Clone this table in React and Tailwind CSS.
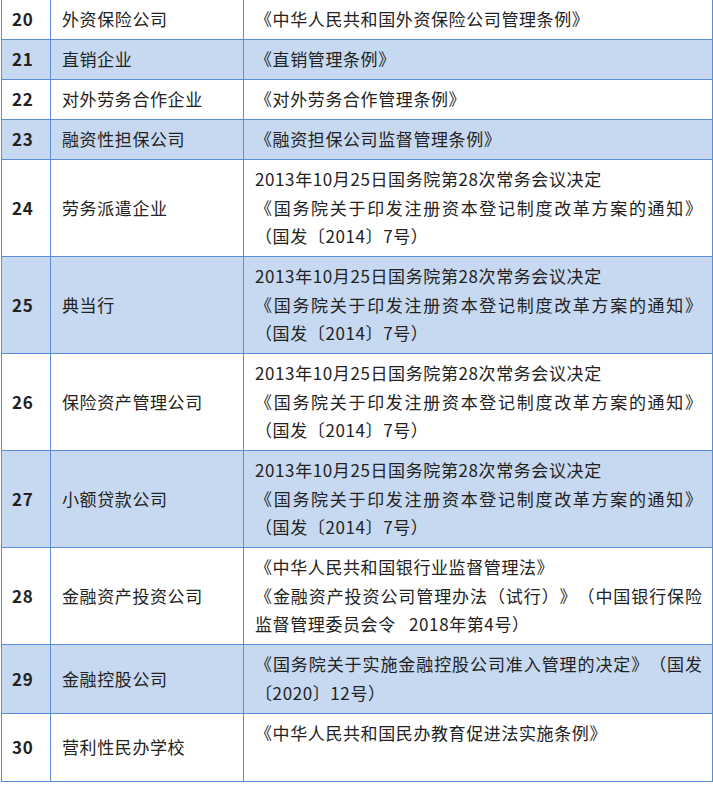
const reform = [
  '2013年10月25日国务院第28次常务会议决定',
  { text: '《国务院关于印发注册资本登记制度改革方案的通知》', justify: true },
  '（国发〔2014〕7号）',
]

const rows = [
  { no: 20, name: '外资保险公司', law: ['《中华人民共和国外资保险公司管理条例》'] },
  { no: 21, name: '直销企业', law: ['《直销管理条例》'] },
  { no: 22, name: '对外劳务合作企业', law: ['《对外劳务合作管理条例》'] },
  { no: 23, name: '融资性担保公司', law: ['《融资担保公司监督管理条例》'] },
  { no: 24, name: '劳务派遣企业', law: reform },
  { no: 25, name: '典当行', law: reform },
  { no: 26, name: '保险资产管理公司', law: reform },
  { no: 27, name: '小额贷款公司', law: reform },
  {
    no: 28,
    name: '金融资产投资公司',
    law: [
      '《中华人民共和国银行业监督管理法》',
      { text: '《金融资产投资公司管理办法（试行）》（中国银行保险', justify: true },
      '监督管理委员会令\u00a0\u00a0\u00a02018年第4号）',
    ],
  },
  {
    no: 29,
    name: '金融控股公司',
    law: [
      { text: '《国务院关于实施金融控股公司准入管理的决定》（国发', justify: true },
      '〔2020〕12号）',
    ],
  },
  { no: 30, name: '营利性民办学校', law: ['《中华人民共和国民办教育促进法实施条例》', ''] },
]

const Line = ({ line }) => {
  const text = typeof line === 'string' ? line : line.text
  const justify = typeof line === 'object' && line.justify
  return (
    <div
      className={
        justify
          ? 'h-[28.5px] whitespace-nowrap tracking-normal [text-align-last:justify]'
          : 'h-[28.5px] whitespace-nowrap'
      }
    >
      {text}
    </div>
  )
}

export default function App() {
  return (
    <div className="w-[713px] h-[789px] overflow-hidden bg-white">
      <table
        className="ml-px -mt-px w-[711px] table-fixed border-collapse text-[17px] leading-[28.5px] tracking-[0.6px] text-[#222] [text-spacing-trim:space-all]"
        style={{ fontFamily: '"Noto Sans CJK SC", "Noto Sans", sans-serif' }}
      >
        <colgroup>
          <col className="w-[49px]" />
          <col className="w-[193px]" />
          <col className="w-[469px]" />
        </colgroup>
        <tbody>
          {rows.map((r, i) => (
            <tr key={r.no} className={i % 2 === 1 ? 'bg-[#c6d9f0]' : 'bg-white'}>
              <td className="border border-[#5b8dd6] pl-[10px] py-[5.25px] align-middle font-bold">
                {r.no}
              </td>
              <td className="border border-[#5b8dd6] pl-[11px] py-[5.25px] align-middle">
                {r.name}
              </td>
              <td className="border border-[#5b8dd6] pl-[11px] pr-[10px] py-[5.25px] align-top">
                {r.law.map((line, k) => (
                  <Line key={k} line={line} />
                ))}
              </td>
            </tr>
          ))}
        </tbody>
      </table>
    </div>
  )
}
